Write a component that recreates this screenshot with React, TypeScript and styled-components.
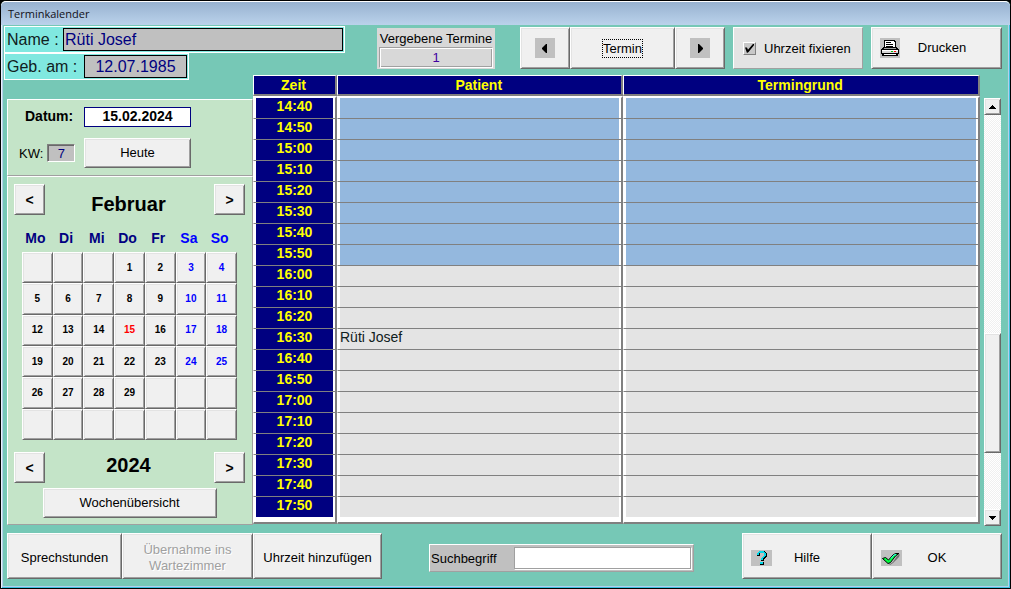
import React, { useState } from "react";
import styled, { createGlobalStyle, css } from "styled-components";

const GlobalStyle = createGlobalStyle`
  *, *::before, *::after { box-sizing: border-box; }
  body {
    margin: 0;
    background: #000;
    font-family: "Liberation Sans", Arial, sans-serif;
    font-size: 13px;
    color: #000;
  }
  button, input { font: inherit; color: inherit; margin: 0; border-radius: 0; }
`;

const raised = css`
  border: 1px solid;
  border-color: #fff #696969 #696969 #fff;
  box-shadow: inset 1px 1px 0 #e3e3e3, inset -1px -1px 0 #a0a0a0;
`;

/* ---------- window frame ---------- */

const Frame = styled.div`
  display: flex;
  flex-direction: column;
  min-height: 100vh;
  border: 1px solid #000;
  border-radius: 6px 6px 0 0;
  background: #76c8b6;
  box-shadow: inset 1px 0 0 #e8f2fb, inset -1px -1px 0 #3cc0e0, inset 2px 0 0 #b4d0ea,
    inset -2px -2px 0 #b4d0ea;
  padding: 0 2px 2px;
`;

const TitleBar = styled.header`
  height: 24px;
  margin: 0 -2px;
  padding: 0 7px;
  border-top: 1px solid #fff;
  border-radius: 5px 5px 0 0;
  background: linear-gradient(#98b2d0, #bad2eb);
  font: 11px/24px "Open Sans", sans-serif;
  color: #101018;
`;

const Main = styled.main`
  flex: 1;
  display: grid;
  grid-template-columns: 250px minmax(0, 1fr);
  padding-right: 6px;
`;

const Column = styled.div`
  display: flex;
  flex-direction: column;
  min-width: 0;
`;

/* ---------- buttons ---------- */

const Button = styled.button<{ $width?: number; $height?: number; $bold?: boolean }>`
  ${raised}
  display: flex;
  align-items: center;
  justify-content: center;
  width: ${(p) => (p.$width ? `${p.$width}px` : "auto")};
  height: ${(p) => (p.$height ? `${p.$height}px` : "auto")};
  padding: 0;
  background: #f0f0f0;
  font-size: ${(p) => (p.$bold ? 14 : 13)}px;
  font-weight: ${(p) => (p.$bold ? 700 : 400)};
  line-height: 16px;
  &:disabled {
    color: #a0a0a0;
    text-shadow: 1px 1px 0 #fff;
  }
`;

const IconButton = styled(Button)<{ $tail: number }>`
  display: grid;
  grid-template-columns: auto 1fr ${(p) => p.$tail}px;
  padding: 0 8px;
`;

const FocusText = styled.span`
  outline: 1px dotted #000;
  line-height: 17px;
`;

const Icon = styled.svg`
  display: block;
  background: #c0c0c0;
`;

/* ---------- patient ---------- */

const PatientBlock = styled.section`
  display: flex;
  flex-direction: column;
  align-items: flex-start;
  padding: 1px 0 0 1px;
  margin-bottom: 19px;
`;

const PatientLine = styled.label<{ $width: number }>`
  display: flex;
  align-items: center;
  justify-content: space-between;
  flex: none;
  width: ${(p) => p.$width}px;
  height: 27px;
  padding: 0 1px 0 2px;
  border: 1px solid #fff;
  background: #80e8e0;
  font-size: 16px;
  color: #102020;
`;

const PatientInput = styled.input<{ $width: number; $center?: boolean }>`
  width: ${(p) => p.$width}px;
  height: 23px;
  padding: 0 1px;
  border: 1px solid #000;
  background: #c0c0c0;
  color: #000080;
  text-align: ${(p) => (p.$center ? "center" : "left")};
`;

/* ---------- calendar ---------- */

const Calendar = styled.aside`
  flex: 1;
  display: flex;
  flex-direction: column;
  margin: 0 0 1px 4px;
`;

const Panel = styled.section`
  border: 1px solid;
  border-color: #fff #a0a0a0 #a0a0a0 #fff;
  background: #c4e4c8;
`;

const DatePanel = styled(Panel)`
  display: grid;
  grid-template-columns: 76px 107px;
  grid-template-rows: 19px 30px;
  row-gap: 12px;
  align-items: center;
  height: 77px;
  padding-top: 7px;
`;

const DateLabel = styled.label`
  padding: 0 0 2px 17px;
  font-size: 14px;
  font-weight: 700;
`;

const DateInput = styled.input`
  width: 107px;
  height: 20px;
  padding: 0 0 2px;
  border: 1px solid #000080;
  background: #fff;
  font-size: 14px;
  font-weight: 700;
  text-align: center;
`;

const WeekLabel = styled.label`
  display: flex;
  align-items: center;
  gap: 4px;
  padding-left: 11px;
  white-space: nowrap;
`;

const WeekInput = styled.input`
  width: 28px;
  height: 18px;
  padding: 0;
  border: 1px solid;
  border-color: #808080 #fff #fff #808080;
  box-shadow: inset 1px 1px 0 #696969;
  background: #c0c0c0;
  color: #000080;
  text-align: center;
`;

const MonthPanel = styled(Panel)`
  flex: 1;
  display: flex;
  flex-direction: column;
  padding: 7px 7px 6px 6px;
`;

const Stepper = styled.div`
  display: flex;
  justify-content: space-between;
  align-items: center;
  height: 31px;
`;

const StepTitle = styled.h2<{ $drop?: boolean }>`
  margin: 0;
  padding: ${(p) => (p.$drop ? "8px 2px 0 0" : "0 2px 6px 0")};
  font-size: 20px;
  line-height: 24px;
`;

const Weekdays = styled.div`
  display: grid;
  grid-template-columns: repeat(7, 1fr);
  margin: 14px 10px 5px 6px;
  text-align: center;
  font-size: 14px;
  font-weight: 700;
  line-height: 18px;
`;

const Weekday = styled.span<{ $weekend: boolean }>`
  color: ${(p) => (p.$weekend ? "#0000ff" : "#000080")};
`;

const Days = styled.div`
  flex: 1;
  display: grid;
  grid-template-columns: repeat(7, 1fr);
  grid-template-rows: repeat(6, 1fr);
  margin: 0 8px 12px 8px;
`;

const Day = styled(Button)<{ $tone: string }>`
  font-size: 10px;
  font-weight: 700;
  color: ${(p) => p.$tone};
`;

const Center = styled.div`
  display: flex;
  justify-content: center;
  padding-top: 5px;
`;

/* ---------- toolbar ---------- */

const Toolbar = styled.div`
  display: flex;
  justify-content: flex-end;
  gap: 8px;
  height: 42px;
  margin: 2px 0 6px;
`;

const CountPanel = styled.label`
  display: flex;
  flex-direction: column;
  align-items: center;
  width: 118px;
  height: 41px;
  margin: 1px 17px 0 0;
  padding: 3px 2px 0;
  background: #d8d8d8;
  line-height: 16px;
  white-space: nowrap;
`;

const CountInput = styled.input`
  width: 114px;
  height: 21px;
  padding: 0;
  border: 1px solid #a0a0a0;
  border-right-color: #fff;
  border-bottom-color: #fff;
  box-shadow: inset 1px 1px 0 #fff, inset -1px -1px 0 #a0a0a0;
  background: #d8d8d8;
  color: #4000a0;
  text-align: center;
`;

const ButtonGroup = styled.div`
  display: flex;
`;

const CheckPanel = styled.label`
  display: flex;
  align-items: center;
  gap: 8px;
  width: 130px;
  padding: 1px 9px 0;
  border: 1px solid;
  border-color: #fff #a0a0a0 #a0a0a0 #fff;
  background: #e4e4e4;
  white-space: nowrap;
`;

const CheckBox = styled.input`
  appearance: none;
  display: grid;
  place-items: center;
  flex: none;
  width: 13px;
  height: 13px;
  border: 1px solid;
  border-color: #fff #808080 #808080 #fff;
  background: #c8c8c8;
  &:checked::before {
    content: "";
    width: 9px;
    height: 9px;
    background: #000;
    clip-path: polygon(0 40%, 22% 40%, 33% 65%, 88% 0, 100% 0, 100% 15%, 40% 90%, 22% 100%);
  }
`;

/* ---------- schedule ---------- */

const Schedule = styled.section`
  flex: 1;
  display: flex;
  gap: 4px;
  padding-right: 1px;
`;

const Table = styled.table`
  flex: 1;
  align-self: flex-start;
  table-layout: fixed;
  border-collapse: separate;
  border-spacing: 0;
  margin-bottom: 2px;
  font-size: 14px;
`;

const Head = styled.th<{ $width?: string }>`
  width: ${(p) => p.$width ?? "auto"};
  height: 21px;
  padding: 0 2px 0 0;
  border: solid;
  border-width: 1px 2px 2px 1px;
  border-color: #fff #808080 #808080 #fff;
  background: #000080;
  color: #ffff00;
  line-height: 16px;
`;

const cell = css`
  height: 21px;
  padding: 0 2px 4px;
  border-left: 1px solid #fff;
  border-right: 2px solid #808080;
  border-bottom: 1px solid #808080;
  box-shadow: inset 2px 0 0 #fff, inset -2px 0 0 #fff;
  line-height: 16px;
  tr:first-child > & {
    height: 23px;
    border-top: 2px solid #fff;
  }
  tr:last-child > & {
    height: 27px;
    padding-bottom: 9px;
    border-bottom: 2px solid #808080;
    box-shadow: inset 2px 0 0 #fff, inset -2px 0 0 #fff, inset 0 -5px 0 #fff;
  }
`;

const TimeCell = styled.th`
  ${cell}
  background: #000080;
  color: #ffff00;
  font-weight: 700;
  text-align: center;
`;

const SlotCell = styled.td<{ $busy: boolean }>`
  ${cell}
  background: ${(p) => (p.$busy ? "#94b8de" : "#e4e4e4")};
  color: #102020;
`;

const ScrollBar = styled.div`
  display: flex;
  flex-direction: column;
  width: 17px;
  margin-top: 23px;
  background: repeating-conic-gradient(#f0f0f0 0 25%, #fff 0 50%) 0 0 / 2px 2px;
`;

const ScrollSpace = styled.div<{ $grow: number }>`
  flex: ${(p) => p.$grow} 0 0;
`;

const Thumb = styled.div`
  ${raised}
  flex: 119 0 0;
  background: #f0f0f0;
`;

/* ---------- footer ---------- */

const Footer = styled.footer`
  display: flex;
  justify-content: space-between;
  height: 46px;
  margin: 7px 6px 7px 4px;
  ${Button} {
    padding-top: 3px;
  }
`;

const SearchPanel = styled.label`
  display: flex;
  align-items: center;
  justify-content: space-between;
  align-self: center;
  width: 265px;
  height: 28px;
  margin: 4px 1px 0 0;
  padding: 0 1px;
  border: 1px solid;
  border-color: #fff #a0a0a0 #a0a0a0 #fff;
  background: #c0c0c0;
`;

const SearchInput = styled.input`
  width: 178px;
  height: 23px;
  padding: 0 4px;
  border: 1px solid;
  border-color: #a0a0a0 #fff #fff #a0a0a0;
  box-shadow: inset -1px -1px 0 #a0a0a0;
  background: #fff;
`;

/* ---------- icons ---------- */

const Triangle = ({ dir }: { dir: "left" | "right" }) => (
  <Icon width="20" height="20" viewBox="0 0 20 20" aria-hidden="true">
    <path d={dir === "left" ? "M12 6v9h-1L7 11V10l4-4z" : "M8 6v9h1l4-4V10L9 6z"} />
  </Icon>
);

const ScrollArrow = ({ up }: { up?: boolean }) => (
  <svg width="7" height="4" viewBox="0 0 7 4" shapeRendering="crispEdges" aria-hidden="true">
    <path d={up ? "M3 0h1v1h1v1h1v1h1v1H0V3h1V2h1V1h1z" : "M0 0h7v1H6v1H5v1H4v1H3V3H2V2H1V1H0z"} />
  </svg>
);

const PrinterIcon = () => (
  <Icon width="20" height="20" viewBox="0 0 20 20" shapeRendering="crispEdges" aria-hidden="true">
    <path d="M4 2h11v1h1v6h1v1h1v1h1v5h-1v2H2v-2H1v-5h1v-1h1V9h1z" fill="#000" />
    <path d="M5 3h9v1h1v5H5z" fill="#fff" />
    <path d="M6 4h5v1H6zM6 6h7v1H6zM6 8h7v1H6z" fill="#000" />
    <path d="M4 10h12v1H4z" fill="#a0a0a0" />
    <path d="M2 12h16v1H2z" fill="#fff" />
    <path d="M2 13h16v2H2z" fill="#d8d8d8" />
    <path d="M4 16h12v1H4z" fill="#fff" />
    <path d="M11 13h2v1h-2z" fill="#00c000" />
    <path d="M14 13h2v1h-2z" fill="#ff0000" />
  </Icon>
);

const HelpIcon = () => (
  <Icon width="21" height="16" viewBox="0 0 21 16" shapeRendering="crispEdges" aria-hidden="true">
    <path d="M8 1h6v1h1v1h1v4h-1v1h-1v1h-1v2h-3V8h1V7h1V6h1V3H9v3H6V3h1V2h1zM9 12h4v3H9z" fill="#000" />
    <path d="M8 1h5v1h1v1h1v3h-1v1h-1v1h-1v2h-2V8h1V7h1V6h1V3H8v2H6V3h1V2h1zM9 12h3v2H9z" fill="#00d8e8" />
  </Icon>
);

const OkIcon = () => (
  <Icon width="21" height="16" viewBox="0 0 21 16" aria-hidden="true">
    <path d="M4 9l5 5 3-2 4-6 3-2-1 3-6 6-3 2z" fill="#707070" />
    <path d="M1.500 8.500L4.500 7.500 7.500 10 12.500 4.500 15 3.500H18L14.500 6 9.500 12.500 7 13.500z" fill="#00ff40" stroke="#000" />
    <path d="M10 8.500L13 5 15 4.500" fill="none" stroke="#40ffff" />
  </Icon>
);

/* ---------- data ---------- */

const WEEKDAYS = ["Mo", "Di", "Mi", "Do", "Fr", "Sa", "So"];
const FIRST_DAY_OFFSET = 3;
const DAYS_IN_MONTH = 29;
const SELECTED_DAY = 15;

const cells = Array.from({ length: 42 }, (_, i) => {
  const day = i - FIRST_DAY_OFFSET + 1;
  return day >= 1 && day <= DAYS_IN_MONTH ? day : null;
});

const slots = Array.from({ length: 20 }, (_, i) => {
  const minutes = 14 * 60 + 40 + i * 10;
  const time = `${Math.floor(minutes / 60)}:${String(minutes % 60).padStart(2, "0")}`;
  return { time, busy: minutes < 16 * 60, patient: time === "16:30" ? "Rüti Josef" : "" };
});

const dayTone = (day: number | null, index: number) =>
  day === SELECTED_DAY ? "#ff0000" : index % 7 > 4 ? "#0000ff" : "#000";

export default function App() {
  const [fixed, setFixed] = useState(true);
  const [term, setTerm] = useState("");

  return (
    <>
      <GlobalStyle />
      <Frame>
        <TitleBar>Terminkalender</TitleBar>
        <Main>
          <Column>
            <PatientBlock>
              <PatientLine $width={341}>
                Name :
                <PatientInput $width={280} readOnly value="Rüti Josef" />
              </PatientLine>
              <PatientLine $width={185}>
                Geb. am :
                <PatientInput $width={103} $center readOnly value="12.07.1985" />
              </PatientLine>
            </PatientBlock>
            <Calendar>
              <DatePanel>
                <DateLabel htmlFor="date">Datum:</DateLabel>
                <DateInput id="date" defaultValue="15.02.2024" />
                <WeekLabel>
                  KW:
                  <WeekInput readOnly value="7" />
                </WeekLabel>
                <Button $height={30}>Heute</Button>
              </DatePanel>
              <MonthPanel>
                <Stepper>
                  <Button $width={31} $height={31} $bold aria-label="Voriger Monat">&lt;</Button>
                  <StepTitle $drop>Februar</StepTitle>
                  <Button $width={31} $height={31} $bold aria-label="Nächster Monat">&gt;</Button>
                </Stepper>
                <Weekdays>
                  {WEEKDAYS.map((name, i) => (
                    <Weekday key={name} $weekend={i > 4}>{name}</Weekday>
                  ))}
                </Weekdays>
                <Days>
                  {cells.map((day, i) => (
                    <Day key={i} $tone={dayTone(day, i)}>{day}</Day>
                  ))}
                </Days>
                <Stepper>
                  <Button $width={31} $height={31} $bold aria-label="Voriges Jahr">&lt;</Button>
                  <StepTitle>2024</StepTitle>
                  <Button $width={31} $height={31} $bold aria-label="Nächstes Jahr">&gt;</Button>
                </Stepper>
                <Center>
                  <Button $width={174} $height={30}>Wochenübersicht</Button>
                </Center>
              </MonthPanel>
            </Calendar>
          </Column>
          <Column>
            <Toolbar>
              <CountPanel>
                Vergebene Termine
                <CountInput readOnly value="1" />
              </CountPanel>
              <ButtonGroup>
                <Button $width={50} aria-label="Voriger Termin"><Triangle dir="left" /></Button>
                <Button $width={105}><FocusText>Termin</FocusText></Button>
                <Button $width={50} aria-label="Nächster Termin"><Triangle dir="right" /></Button>
              </ButtonGroup>
              <CheckPanel>
                <CheckBox type="checkbox" checked={fixed} onChange={(e) => setFixed(e.target.checked)} />
                Uhrzeit fixieren
              </CheckPanel>
              <IconButton $width={131} $tail={9}>
                <PrinterIcon />
                <span>Drucken</span>
              </IconButton>
            </Toolbar>
            <Schedule>
              <Table>
                <thead>
                  <tr>
                    <Head scope="col" $width="84px">Zeit</Head>
                    <Head scope="col" $width="39.4%">Patient</Head>
                    <Head scope="col">Termingrund</Head>
                  </tr>
                </thead>
                <tbody>
                  {slots.map((slot) => (
                    <tr key={slot.time}>
                      <TimeCell scope="row">{slot.time}</TimeCell>
                      <SlotCell $busy={slot.busy}>{slot.patient}</SlotCell>
                      <SlotCell $busy={slot.busy} />
                    </tr>
                  ))}
                </tbody>
              </Table>
              <ScrollBar>
                <Button $height={17} aria-label="Nach oben"><ScrollArrow up /></Button>
                <ScrollSpace $grow={219} />
                <Thumb />
                <ScrollSpace $grow={56} />
                <Button $height={17} aria-label="Nach unten"><ScrollArrow /></Button>
              </ScrollBar>
            </Schedule>
          </Column>
        </Main>
        <Footer>
          <ButtonGroup>
            <Button $width={115}>Sprechstunden</Button>
            <Button $width={131} disabled>Übernahme ins<br />Wartezimmer</Button>
            <Button $width={129}>Uhrzeit hinzufügen</Button>
          </ButtonGroup>
          <SearchPanel>
            Suchbegriff
            <SearchInput value={term} onChange={(e) => setTerm(e.target.value)} />
          </SearchPanel>
          <ButtonGroup>
            <IconButton $width={130} $tail={21}>
              <HelpIcon />
              <span>Hilfe</span>
            </IconButton>
            <IconButton $width={130} $tail={21}>
              <OkIcon />
              <span>OK</span>
            </IconButton>
          </ButtonGroup>
        </Footer>
      </Frame>
    </>
  );
}
